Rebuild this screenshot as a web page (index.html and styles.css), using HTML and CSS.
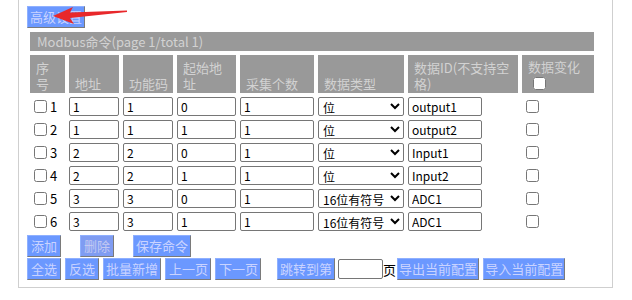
FILE: index.html
```html
<!DOCTYPE html>
<html lang="zh-CN">
<head>
  <meta charset="UTF-8" />
  <title>Modbus命令</title>
  <link rel="stylesheet" href="styles.css">
</head>
<body>
  <div class="panel">
    <button class="btn btn-4 btn-adv">高级设置</button>
    <svg class="arrow" width="80" height="24" viewBox="50 0 80 24">
      <polygon points="52,16 72,7 69,12.5 126,10.5 126,12 69,18 73,24" fill="#e8282b"/>
    </svg>

    <table class="cmd-table">
      <colgroup>
        <col style="width:35px"><col style="width:50px"><col style="width:50px"><col style="width:59px">
        <col style="width:74px"><col style="width:86px"><col style="width:110px"><col style="width:72px">
      </colgroup>
      <tr>
        <th class="caption" colspan="8">Modbus命令(page 1/total 1)</th>
      </tr>
      <tr class="head">
        <th>序号</th>
        <th>地址</th>
        <th>功能码</th>
        <th>起始地址</th>
        <th>采集个数</th>
        <th>数据类型</th>
        <th>数据ID(不支持空格)</th>
        <th>数据变化<br><input type="checkbox" class="chk-all"></th>
      </tr>
      <tr>
        <td><input type="checkbox">1</td>
        <td><input class="txt w50" value="1"></td>
        <td><input class="txt w50" value="1"></td>
        <td><input class="txt w59" value="0"></td>
        <td><input class="txt w74" value="1"></td>
        <td><select><option>位</option></select></td>
        <td><input class="txt w74" value="output1"></td>
        <td><input type="checkbox"></td>
      </tr>
      <tr>
        <td><input type="checkbox">2</td>
        <td><input class="txt w50" value="1"></td>
        <td><input class="txt w50" value="1"></td>
        <td><input class="txt w59" value="1"></td>
        <td><input class="txt w74" value="1"></td>
        <td><select><option>位</option></select></td>
        <td><input class="txt w74" value="output2"></td>
        <td><input type="checkbox"></td>
      </tr>
      <tr>
        <td><input type="checkbox">3</td>
        <td><input class="txt w50" value="2"></td>
        <td><input class="txt w50" value="2"></td>
        <td><input class="txt w59" value="0"></td>
        <td><input class="txt w74" value="1"></td>
        <td><select><option>位</option></select></td>
        <td><input class="txt w74" value="Input1"></td>
        <td><input type="checkbox"></td>
      </tr>
      <tr>
        <td><input type="checkbox">4</td>
        <td><input class="txt w50" value="2"></td>
        <td><input class="txt w50" value="2"></td>
        <td><input class="txt w59" value="1"></td>
        <td><input class="txt w74" value="1"></td>
        <td><select><option>位</option></select></td>
        <td><input class="txt w74" value="Input2"></td>
        <td><input type="checkbox"></td>
      </tr>
      <tr>
        <td><input type="checkbox">5</td>
        <td><input class="txt w50" value="3"></td>
        <td><input class="txt w50" value="3"></td>
        <td><input class="txt w59" value="0"></td>
        <td><input class="txt w74" value="1"></td>
        <td><select><option>16位有符号</option></select></td>
        <td><input class="txt w74" value="ADC1"></td>
        <td><input type="checkbox"></td>
      </tr>
      <tr>
        <td><input type="checkbox">6</td>
        <td><input class="txt w50" value="3"></td>
        <td><input class="txt w50" value="3"></td>
        <td><input class="txt w59" value="1"></td>
        <td><input class="txt w74" value="1"></td>
        <td><select><option>16位有符号</option></select></td>
        <td><input class="txt w74" value="ADC1"></td>
        <td><input type="checkbox"></td>
      </tr>
    </table>

    <div class="btn-row row-edit">
      <button class="btn">添加</button>
      <button class="btn btn-del">删除</button>
      <button class="btn btn-4">保存命令</button>
    </div>
    <div class="btn-row row-page">
      <button class="btn">全选</button>
      <button class="btn">反选</button>
      <button class="btn btn-4">批量新增</button>
      <button class="btn btn-3">上一页</button>
      <button class="btn btn-3">下一页</button>
      <button class="btn btn-4 btn-jump">跳转到第</button>
      <input class="txt page-input">
      <span class="page-unit">页</span>
      <button class="btn btn-6">导出当前配置</button>
      <button class="btn btn-6">导入当前配置</button>
    </div>
  </div>
</body>
</html>
```

FILE: styles.css
```css
body {
  margin: 0;
  background: #fff;
  font-family: "Noto Sans CJK SC", "Noto Sans", sans-serif;
  font-size: 13px;
  color: #000;
}

.panel {
  position: relative;
  width: 579px;
  margin-left: 18px;
  padding: 6px 7px 7px 7px;
  border: 1px solid #cfcfcf;
  border-top: none;
}

.arrow {
  position: absolute;
  left: 32px;
  top: 0;
}

.btn {
  height: 22px;
  padding: 0 3px;
  border: 1px solid;
  border-color: #8fb0ff #7a7a7a #7a7a7a #8fb0ff;
  background: #6b98ff;
  color: #c9d3ff;
  font-family: inherit;
  font-size: 13px;
  line-height: 18px;
  cursor: pointer;
}

.btn-3 {
  padding: 0 2px 0 3px;
}

.btn-4 {
  padding: 0 2px;
}

.btn-6 {
  padding: 0 1px;
}

.btn-adv {
  display: block;
  margin-left: 1px;
}

.cmd-table {
  table-layout: fixed;
  width: 572px;
  border-spacing: 4px;
}

.cmd-table th {
  background: #999;
  color: #d2d2d2;
  font-weight: normal;
  text-align: left;
  vertical-align: bottom;
  padding: 0 4px 1px 6px;
  line-height: 16px;
}

.cmd-table th.caption {
  height: 19px;
  padding: 0 7px;
  line-height: 19px;
  vertical-align: middle;
}

.head th {
  height: 38px;
  box-sizing: border-box;
  word-break: break-all;
}

.chk-all {
  margin: 1px 0 2px 5px;
  vertical-align: middle;
}

.cmd-table td {
  padding: 0;
  height: 19px;
  line-height: 19px;
  white-space: nowrap;
  vertical-align: top;
}

.cmd-table td input[type="checkbox"] {
  margin: 3px 3px 3px 4px;
  vertical-align: top;
}

.txt {
  box-sizing: border-box;
  height: 19px;
  padding: 0 3px;
  border: 1px solid #767676;
  border-radius: 2px;
  font-family: inherit;
  font-size: 12px;
  color: #000;
  vertical-align: top;
}

.w50 { width: 50px; }
.w59 { width: 59px; }
.w74 { width: 74px; }

select {
  box-sizing: border-box;
  width: 86px;
  height: 19px;
  padding: 0;
  border: 1px solid #767676;
  border-radius: 2px;
  background: #fff;
  font-family: inherit;
  font-size: 12px;
  color: #000;
  vertical-align: top;
}

.btn-row {
  display: flex;
  align-items: center;
  gap: 4px;
  margin-left: 1px;
}

.row-edit {
  gap: 19px;
  margin-bottom: 1px;
}

.btn-del {
  background: #7f9cf2;
  color: #c3c9f2;
}

.btn-jump {
  margin-left: 12px;
}

.page-input {
  width: 45px;
  height: 20px;
  margin-left: -1px;
}

.page-unit {
  margin: 0 -3px 0 -4px;
  font-size: 13px;
}
```
